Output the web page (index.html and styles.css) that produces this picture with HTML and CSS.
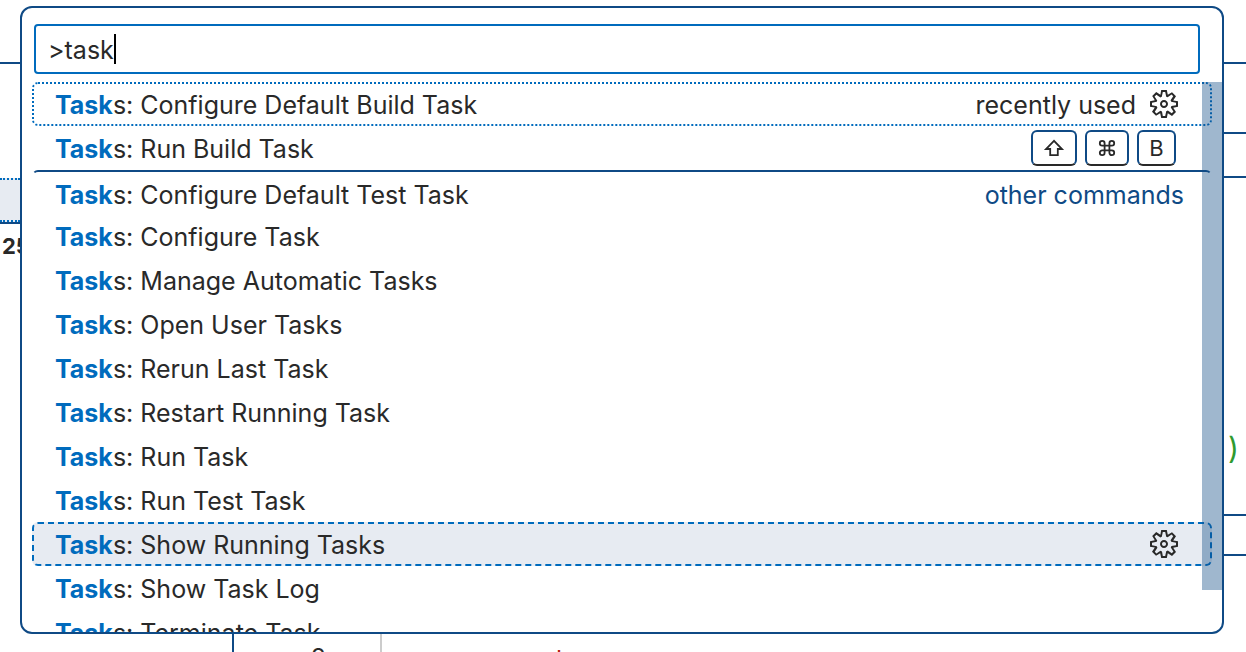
FILE: index.html
```html
<!DOCTYPE html>
<html lang="en">
<head>
<meta charset="utf-8">
<title>Command Palette</title>
<link rel="stylesheet" href="styles.css">
</head>
<body>
<svg class="defs" aria-hidden="true">
  <symbol id="gear" viewBox="0 0 16 16"><path fill="currentColor" fill-rule="evenodd" d="M9.1 4.4L8.6 2H7.4l-.5 2.4-.7.3-2-1.3-.9.8 1.3 2-.2.7-2.4.5v1.2l2.4.5.3.8-1.3 2 .8.8 2-1.3.8.3.4 2.3h1.2l.5-2.4.8-.3 2 1.3.8-.8-1.3-2 .3-.8 2.3-.4V7.4l-2.4-.5-.3-.8 1.3-2-.8-.8-2 1.3-.7-.2zM9.4 1l.5 2.4L12 2.1l2 2-1.4 2.1 2.4.4v2.8l-2.4.5L14 12l-2 2-2.1-1.4-.5 2.4H6.6l-.5-2.4L4 13.9l-2-2 1.4-2.1L1 9.4V6.6l2.4-.5L2.1 4l2-2 2.1 1.4.4-2.4h2.8zm.6 7c0 1.1-.9 2-2 2s-2-.9-2-2 .9-2 2-2 2 .9 2 2zM8 9c.6 0 1-.4 1-1s-.4-1-1-1-1 .4-1 1 .4 1 1 1z"/></symbol>
</svg>
<div class="workbench">
  <aside class="sidebar">
    <div class="tabs"></div>
    <div class="focused-row"></div>
    <b class="count">25</b>
  </aside>

  <main class="palette">
    <label class="field"><input class="query" type="text" value="&gt;task" aria-label="Command"><span class="caret"></span></label>
    <div class="results">
      <ul class="list">
        <li class="row focused"><span class="name"><b>Task</b>s: Configure Default Build Task</span><span class="note">recently used</span><button class="action" aria-label="Configure keybinding"><svg class="gear"><use href="#gear"/></svg></button></li>
        <li class="row"><span class="name"><b>Task</b>s: Run Build Task</span>
          <span class="keys">
            <kbd class="key"><svg class="glyph" viewBox="0 0 22 22" aria-label="Shift"><path d="M11 3.8L3 12h4.2v6.2h7.6V12H19z"/></svg></kbd>
            <kbd class="key"><svg class="glyph" viewBox="0 0 20 22" aria-label="Command"><path d="M7.6 8.6V6.2A2.4 2.4 0 1 0 5.2 8.6h9.6A2.4 2.4 0 1 0 12.4 6.2v9.6a2.4 2.4 0 1 0 2.4-2.4H5.2A2.4 2.4 0 1 0 7.6 15.8z"/></svg></kbd>
            <kbd class="key">B</kbd>
          </span></li>
        <li class="row separated"><span class="name"><b>Task</b>s: Configure Default Test Task</span><span class="note group">other commands</span></li>
        <li class="row"><span class="name"><b>Task</b>s: Configure Task</span></li>
        <li class="row"><span class="name"><b>Task</b>s: Manage Automatic Tasks</span></li>
        <li class="row"><span class="name"><b>Task</b>s: Open User Tasks</span></li>
        <li class="row"><span class="name"><b>Task</b>s: Rerun Last Task</span></li>
        <li class="row"><span class="name"><b>Task</b>s: Restart Running Task</span></li>
        <li class="row"><span class="name"><b>Task</b>s: Run Task</span></li>
        <li class="row"><span class="name"><b>Task</b>s: Run Test Task</span></li>
        <li class="row hovered"><span class="name"><b>Task</b>s: Show Running Tasks</span><button class="action" aria-label="Configure keybinding"><svg class="gear"><use href="#gear"/></svg></button></li>
        <li class="row"><span class="name"><b>Task</b>s: Show Task Log</span></li>
        <li class="row"><span class="name"><b>Task</b>s: Terminate Task</span></li>
      </ul>
      <div class="scrollbar"></div>
    </div>
  </main>

  <section class="editor">
    <div class="bar title"></div>
    <div class="bar tab"></div>
    <div class="bar crumb"></div>
    <div class="code">)</div>
    <div class="bar panel-top"></div>
    <div class="bar panel-tabs"></div>
  </section>

  <footer class="lower">
    <div class="explorer"></div>
    <div class="gutter">2</div>
    <div class="source">l</div>
  </footer>
</div>
</body>
</html>
```

FILE: styles.css
```css
* { box-sizing: border-box; }

body {
  margin: 0;
  background: #fff;
  color: #292929;
  font: 25px/44px Inter, "Liberation Sans", sans-serif;
}

.defs { display: none; }

.workbench {
  display: grid;
  grid-template-columns: 20px minmax(0, 1fr) 22px;
  grid-template-rows: minmax(0, 1fr) 18px;
  height: 100vh;
  overflow: hidden;
}

/* Side bar */
.sidebar { overflow: hidden; }
.tabs { height: 64px; border-bottom: 2px solid #0f4a85; }
.focused-row {
  height: 44px;
  margin-top: 114px;
  background: #e7ebf2;
  border-top: 2px dotted #006bbd;
  border-bottom: 2px dotted #006bbd;
}
.count {
  display: block;
  padding-left: 2px;
  border-top: 2px solid #0f4a85;
  font-size: 22px;
}

/* Command palette */
.palette {
  display: flex;
  flex-direction: column;
  margin-top: 6px;
  padding: 16px 0 0;
  border: 2px solid #0f4a85;
  border-radius: 12px;
  overflow: hidden;
}
.field {
  display: flex;
  align-items: center;
  flex: none;
  height: 50px;
  margin: 0 22px 8px 12px;
  padding-left: 12px;
  border: 2px solid #006bbd;
  border-radius: 4px;
}
.query {
  field-sizing: content;
  padding: 2px 0 0;
  border: 0;
  outline: 0;
  background: none;
  color: inherit;
  font: inherit;
}
.caret { width: 2px; height: 30px; background: #000; }

.results { position: relative; flex: 1; min-height: 0; }
.list { margin: 0; padding: 0 10px; list-style: none; }
.row {
  display: flex;
  align-items: center;
  height: 44px;
  padding: 0 26px 0 21px;
  border: 2px solid transparent;
  border-radius: 6px;
}
.name,
.note { padding-top: 2px; white-space: nowrap; }
.name { flex: 1; }
.name b { color: #006bbd; font-weight: 700; }
.focused { border: 2px dotted #006bbd; }
.hovered { background: #e7ebf2; border: 2px dashed #006bbd; }
.separated { padding-top: 4px; border-top-color: #0f4a85; }
.group { color: #0f4a85; }
.action {
  display: flex;
  justify-content: center;
  width: 40px;
  margin-left: 8px;
  padding: 0;
  border: 0;
  background: none;
  color: inherit;
}
.gear { width: 32px; height: 32px; }

.keys { display: flex; gap: 8px; margin-right: 8px; }
.key {
  display: flex;
  align-items: center;
  justify-content: center;
  min-width: 39px;
  height: 36px;
  padding: 0 10px;
  border: 2px solid #0f4a85;
  border-bottom-color: #292929;
  border-radius: 6px;
  font: 22px/32px Inter, "Liberation Sans", sans-serif;
}
.glyph { height: 22px; fill: none; stroke: currentColor; stroke-width: 1.8; }

.scrollbar {
  position: absolute;
  top: 0;
  right: 0;
  width: 20px;
  height: 508px;
  background: rgba(15, 74, 133, 0.4);
}

/* Editor */
.editor { overflow: hidden; }
.bar { border-bottom: 2px solid #0f4a85; }
.title { height: 64px; }
.tab { height: 70px; }
.crumb { height: 44px; }
.code {
  height: 336px;
  padding: 248px 0 0 4px;
  color: #2f9a2f;
  font-size: 30px;
}
.panel-top { height: 2px; }
.panel-tabs { height: 40px; }

/* Area under the palette */
.lower { display: flex; grid-column: 1 / -1; overflow: hidden; }
.explorer { width: 234px; border-right: 2px solid #0f4a85; }
.gutter {
  width: 148px;
  padding: 2px 54px 0 0;
  border-right: 2px solid #ccc;
  text-align: right;
}
.source { padding: 4px 0 0 174px; color: #b5200d; }
```
